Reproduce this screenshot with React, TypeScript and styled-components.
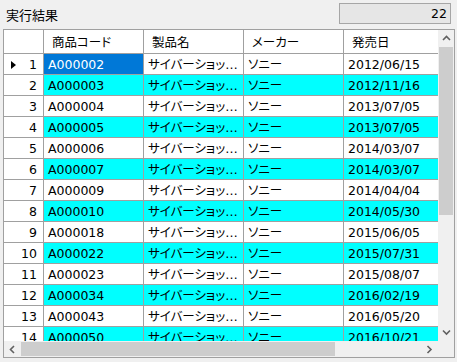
import React from "react";
import styled, { createGlobalStyle } from "styled-components";

const Global = createGlobalStyle`
  html, body { margin: 0; padding: 0; background: #f0f0f0; }
  body { width: 457px; height: 362px; overflow: hidden; }
`;

const FONT = `"DejaVu Sans", "Noto Sans CJK JP", sans-serif`;
const LINE = "#a0a0a0";

const Page = styled.div`
  width: 457px;
  height: 362px;
  background: #f0f0f0;
  display: flex;
  flex-direction: column;
  font-family: ${FONT};
  color: #000;
`;

const TopBar = styled.div`
  height: 29px;
  display: flex;
  align-items: flex-start;
  justify-content: space-between;
`;

const Label = styled.div`
  font-family: "Noto Sans CJK JP", sans-serif;
  font-size: 13px;
  line-height: 16px;
  padding: 7px 0 0 6px;
`;

const CountBox = styled.div`
  box-sizing: border-box;
  margin: 3px 6px 0 0;
  width: 112px;
  height: 21px;
  background: #e6e6e6;
  border: 1px solid #a6a6a6;
  font-size: 12.5px;
  line-height: 19px;
  text-align: right;
  padding-right: 3px;
`;

const GridFrame = styled.div`
  box-sizing: border-box;
  margin-left: 3px;
  width: 452px;
  height: 329px;
  border: 1px solid ${LINE};
  display: grid;
  grid-template-columns: 434px 16px;
  grid-template-rows: 311px 16px;
  background: #f0f0f0;
`;

const Viewport = styled.div`
  overflow: hidden;
  background: #fff;
`;

const Table = styled.div`
  display: flex;
  flex-direction: column;
  width: 540px;
`;

const Row = styled.div<{ $h: number }>`
  display: flex;
  height: ${(p) => p.$h}px;
  flex: none;
`;

const RowHead = styled.div`
  box-sizing: border-box;
  width: 40px;
  flex: none;
  background: #fff;
  border-right: 1px solid ${LINE};
  border-bottom: 1px solid ${LINE};
  display: flex;
  align-items: center;
  justify-content: space-between;
  padding: 1px 6px 0 7px;
  font-size: 12.5px;
`;

const Marker = styled.span<{ $on: boolean }>`
  width: 0;
  height: 0;
  border-top: 4px solid transparent;
  border-bottom: 4px solid transparent;
  border-left: 5px solid ${(p) => (p.$on ? "#000" : "transparent")};
`;

const HeadCell = styled.div`
  box-sizing: border-box;
  width: 100px;
  flex: none;
  background: #fff;
  border-right: 1px solid ${LINE};
  border-bottom: 1px solid ${LINE};
  display: flex;
  align-items: center;
  padding-left: 8px;
  font-family: "Noto Sans CJK JP", sans-serif;
  font-size: 12.5px;
  font-feature-settings: "palt";
`;

const Cell = styled.div<{ $bg: string; $fg: string }>`
  box-sizing: border-box;
  width: 100px;
  flex: none;
  background: ${(p) => p.$bg};
  color: ${(p) => p.$fg};
  border-right: 1px solid ${LINE};
  border-bottom: 1px solid ${LINE};
  padding: 1px 2px 0 4px;
  font-size: 12.5px;
  line-height: 19px;
  white-space: nowrap;
  overflow: hidden;
  text-overflow: ellipsis;
  font-feature-settings: "palt";
`;

const VScroll = styled.div`
  display: flex;
  flex-direction: column;
  background: #f0f0f0;
`;

const HScroll = styled.div`
  display: flex;
  background: #f0f0f0;
`;

const ArrowBtn = styled.div`
  width: 16px;
  height: 17px;
  flex: none;
  display: flex;
  align-items: center;
  justify-content: center;
`;

const HArrowBtn = styled(ArrowBtn)`
  width: 17px;
  height: 16px;
`;

const VTrack = styled.div`
  flex: 1;
  display: flex;
  flex-direction: column;
  padding: 0 1px;
`;

const VThumb = styled.div`
  height: 168px;
  background: #cdcdcd;
`;

const HTrack = styled.div`
  flex: 1;
  display: flex;
  padding: 1px 0;
`;

const HThumb = styled.div`
  width: 314px;
  background: #cdcdcd;
`;

const Corner = styled.div`
  background: #f0f0f0;
`;

const Chevron = ({ dir }: { dir: "up" | "down" | "left" | "right" }) => {
  const pts: Record<string, string> = {
    up: "1,5 4.5,1.5 8,5",
    down: "1,1.5 4.5,5 8,1.5",
    left: "5,1 1.5,4.5 5,8",
    right: "1.5,1 5,4.5 1.5,8",
  };
  const vertical = dir === "up" || dir === "down";
  return (
    <svg width={vertical ? 9 : 7} height={vertical ? 7 : 9} viewBox={vertical ? "0 0 9 7" : "0 0 7 9"}>
      <polyline points={pts[dir]} fill="none" stroke="#606060" strokeWidth="1.6" />
    </svg>
  );
};

const rows: [string, string][] = [
  ["A000002", "2012/06/15"],
  ["A000003", "2012/11/16"],
  ["A000004", "2013/07/05"],
  ["A000005", "2013/07/05"],
  ["A000006", "2014/03/07"],
  ["A000007", "2014/03/07"],
  ["A000009", "2014/04/04"],
  ["A000010", "2014/05/30"],
  ["A000018", "2015/06/05"],
  ["A000022", "2015/07/31"],
  ["A000023", "2015/08/07"],
  ["A000034", "2016/02/19"],
  ["A000043", "2016/05/20"],
  ["A000050", "2016/10/21"],
];

const headers = ["商品コード", "製品名", "メーカー", "発売日", ""];

export default function App() {
  return (
    <Page>
      <Global />
      <TopBar>
        <Label>実行結果</Label>
        <CountBox>22</CountBox>
      </TopBar>
      <GridFrame>
        <Viewport>
          <Table>
            <Row $h={24}>
              <RowHead />
              {headers.map((h, i) => (
                <HeadCell key={i}>{h}</HeadCell>
              ))}
            </Row>
            {rows.map(([code, date], i) => {
              const bg = i % 2 === 1 ? "#00ffff" : "#ffffff";
              return (
                <Row $h={21} key={code}>
                  <RowHead>
                    <Marker $on={i === 0} />
                    <span>{i + 1}</span>
                  </RowHead>
                  <Cell $bg={i === 0 ? "#0078d7" : bg} $fg={i === 0 ? "#fff" : "#000"}>
                    {code}
                  </Cell>
                  <Cell $bg={bg} $fg="#000">サイバーショット DSC-RX100</Cell>
                  <Cell $bg={bg} $fg="#000">ソニー</Cell>
                  <Cell $bg={bg} $fg="#000">{date}</Cell>
                  <Cell $bg={bg} $fg="#000">{"\u00a0"}</Cell>
                </Row>
              );
            })}
          </Table>
        </Viewport>
        <VScroll>
          <ArrowBtn>
            <Chevron dir="up" />
          </ArrowBtn>
          <VTrack>
            <VThumb />
          </VTrack>
          <ArrowBtn>
            <Chevron dir="down" />
          </ArrowBtn>
        </VScroll>
        <HScroll>
          <HArrowBtn>
            <Chevron dir="left" />
          </HArrowBtn>
          <HTrack>
            <HThumb />
          </HTrack>
          <HArrowBtn>
            <Chevron dir="right" />
          </HArrowBtn>
        </HScroll>
        <Corner />
      </GridFrame>
    </Page>
  );
}
